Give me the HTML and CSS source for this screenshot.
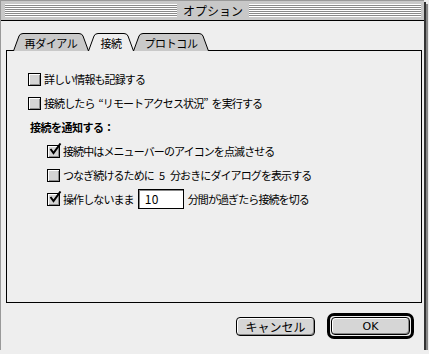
FILE: index.html
```html
<!DOCTYPE html>
<html lang="ja">
<head>
<meta charset="utf-8">
<title>オプション</title>
<link rel="stylesheet" href="styles.css">
</head>
<body>
<div class="window">
  <div class="titlebar">
    <span class="stripes"></span>
    <span class="title">オプション</span>
    <span class="stripes"></span>
  </div>

  <div class="content">
    <div class="tabs">
      <div class="tab tab-wide">
        <svg class="tab-shape" width="76" height="18" viewBox="0 0 76 18"><path d="M0.5,18 L6,3 Q7,0.5 10,0.5 L66,0.5 Q69,0.5 70,3 L75.5,18" fill="#c9c9c9" stroke="#000"/></svg>
        <span class="tab-label">再ダイアル</span>
      </div>
      <div class="tab tab-active">
        <svg class="tab-shape" width="46" height="18" viewBox="0 0 46 18"><path d="M0.5,18 L6,3 Q7,0.5 10,0.5 L36,0.5 Q39,0.5 40,3 L45.5,18" fill="#eee" stroke="#000"/></svg>
        <span class="tab-label">接続</span>
      </div>
      <div class="tab tab-wide">
        <svg class="tab-shape" width="76" height="18" viewBox="0 0 76 18"><path d="M0.5,18 L6,3 Q7,0.5 10,0.5 L66,0.5 Q69,0.5 70,3 L75.5,18" fill="#c9c9c9" stroke="#000"/></svg>
        <span class="tab-label">プロトコル</span>
      </div>
    </div>

    <div class="panel">
      <div class="row">
        <span class="box"></span>
        <span>詳しい情報も記録する</span>
      </div>
      <div class="row">
        <span class="box"></span>
        <span>接続したら<span class="quote">“リモートアクセス状況”</span>を実行する</span>
      </div>
      <div class="row heading">接続を通知する：</div>
      <div class="row sub">
        <span class="box checked"><svg width="14" height="13" viewBox="0 0 14 13"><path d="M2.5,6 L5.5,10 L12.5,0.5" fill="none" stroke="#000" stroke-width="2"/></svg></span>
        <span>接続中はメニューバーのアイコンを点滅させる</span>
      </div>
      <div class="row sub">
        <span class="box"></span>
        <span>つなぎ続けるために<span class="num">5</span>分おきにダイアログを表示する</span>
      </div>
      <div class="row sub">
        <span class="box checked"><svg width="14" height="13" viewBox="0 0 14 13"><path d="M2.5,6 L5.5,10 L12.5,0.5" fill="none" stroke="#000" stroke-width="2"/></svg></span>
        <span>操作しないまま</span>
        <span class="field">10</span>
        <span>分間が過ぎたら接続を切る</span>
      </div>
    </div>

    <div class="buttons">
      <span class="btn cancel">キャンセル</span>
      <span class="default-ring"><span class="btn ok">OK</span></span>
    </div>
  </div>
</div>
</body>
</html>
```

FILE: styles.css
```css
html, body {
  margin: 0;
  background: #eee;
}

body {
  font-family: "Noto Sans CJK JP", "Noto Sans", sans-serif;
  font-size: 11px;
  color: #000;
}

.window {
  width: 424px;
  height: 350px;
  box-sizing: border-box;
  background: #eee;
  border-left: 1px solid #999;
  border-top: 1px solid #999;
  box-shadow: 2px 2px 0 #333, 4px 4px 0 #888;
  display: flex;
  flex-direction: column;
}

.titlebar {
  height: 19px;
  background: #c8c8c8;
  border-bottom: 1px solid #000;
  display: flex;
  align-items: center;
  padding: 0 3px 0 4px;
  gap: 6px;
}

.stripes {
  flex: 1;
  height: 13px;
  background: repeating-linear-gradient(to bottom, #fff 0 1px, #8a8a8a 1px 2px);
}

.title {
  font-size: 12px;
  line-height: 19px;
}

.content {
  flex: 1;
  display: flex;
  flex-direction: column;
  padding: 12px 2px 0 5px;
}

.tabs {
  display: flex;
  height: 17px;
  padding-left: 7px;
  position: relative;
  z-index: 2;
}

.tab {
  position: relative;
  height: 18px;
  margin-right: -1px;
  display: flex;
  justify-content: center;
  align-items: center;
}

.tab-wide { width: 76px; }
.tab-active { width: 46px; z-index: 3; }

.tab-shape {
  position: absolute;
  left: 0;
  top: 0;
}

.tab-label {
  position: relative;
  line-height: 18px;
  padding-top: 1px;
  letter-spacing: -0.4px;
}

.panel {
  height: 253px;
  box-sizing: border-box;
  border: 1px solid #000;
  padding: 16px 0 0 21px;
  position: relative;
  z-index: 1;
  letter-spacing: -0.9px;
}

.row {
  height: 24px;
  display: flex;
  align-items: center;
  gap: 3px;
  white-space: nowrap;
}

.row.sub { padding-left: 19px; }

.quote { margin: 0 4px; }
.num { margin: 0 5px; letter-spacing: 0; }

.heading {
  font-weight: bold;
  padding-left: 2px;
  letter-spacing: -0.5px;
}

.box {
  width: 11px;
  height: 11px;
  border: 1px solid #000;
  background: #d4d4d4;
  box-shadow: inset 1px 1px 0 #fff, inset -1px -1px 0 #8c8c8c;
  position: relative;
  flex: none;
}

.box svg {
  position: absolute;
  left: 0;
  top: -3px;
}

.field {
  width: 38px;
  height: 18px;
  border: 1px solid #000;
  box-shadow: inset 1px 1px 0 #888;
  background: #fff;
  padding-left: 6px;
  line-height: 18px;
  font-size: 12px;
  letter-spacing: 0.5px;
  margin: 0 1px;
}

.buttons {
  display: flex;
  justify-content: flex-end;
  align-items: center;
  gap: 12px;
  padding: 10px 8px 0 0;
}

.btn {
  display: flex;
  align-items: center;
  justify-content: center;
  box-sizing: border-box;
  border: 1px solid #000;
  border-radius: 4px;
  background: #d6d6d6;
  box-shadow: inset 1px 1px 0 #fff, inset -1px -1px 0 #888;
  font-size: 12px;
}

.cancel {
  width: 79px;
  height: 19px;
}

.default-ring {
  box-sizing: border-box;
  width: 87px;
  height: 26px;
  border: 3px solid #000;
  border-radius: 7px;
  padding: 1px;
  display: flex;
}

.ok {
  flex: 1;
  font-family: "DejaVu Sans", sans-serif;
  font-size: 11px;
}
```
